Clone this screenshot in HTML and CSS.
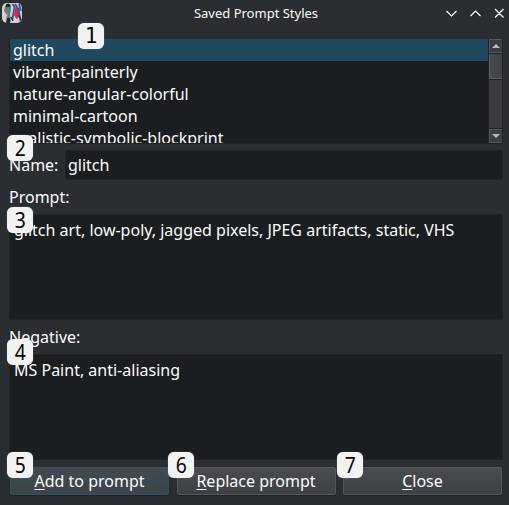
FILE: index.html
```
<!DOCTYPE html>
<html lang="en">
<head>
<meta charset="utf-8">
<title>Saved Prompt Styles</title>
<link rel="stylesheet" href="styles.css">
</head>
<body>
<main class="window">
  <header class="titlebar">
    <svg class="app-icon" viewBox="0 0 20 20">
      <defs><clipPath id="round"><rect width="20" height="20" rx="5"/></clipPath></defs>
      <g clip-path="url(#round)">
        <rect width="20" height="20" fill="#d5d0d0"/>
        <path d="M3 3l3-3 3 2v5l-1 4 1 8H4l1-7-3-4z" fill="#50827f"/>
        <path d="M4 1h4v3H4zM5 15h3v5H4z" fill="#20272c"/>
        <path d="M3 7l3 4-2 7" fill="none" stroke="#a87a75"/>
        <path d="M13.500 4l3 1 .5 9-2.500 2-2.500-4z" fill="#d52b48"/>
        <path d="M10.500 1l2 3-2 12M13 1l3.500 5 2 12M17 1l2 7" fill="none" stroke="#334d99" stroke-width="1.700"/>
        <path d="M9 14l2 4M17 12l2 5" stroke="#232e5c" stroke-width="1.500"/>
      </g>
    </svg>
    <h1 class="title">Saved Prompt Styles</h1>
    <svg class="controls" viewBox="0 0 60 12">
      <path d="M1.500 4L6.500 9L11.500 4M25.500 9L30.500 4L35.500 9M50 2L58.500 10.500M58.500 2L50 10.500"/>
    </svg>
  </header>

  <section class="list">
    <ul class="items">
      <li class="item selected">glitch</li>
      <li class="item">vibrant-painterly</li>
      <li class="item">nature-angular-colorful</li>
      <li class="item">minimal-cartoon</li>
      <li class="item">realistic-symbolic-blockprint</li>
    </ul>
    <div class="scrollbar">
      <div class="arrow"><svg viewBox="0 0 8 4"><path d="M0 4L4 0L8 4z"/></svg></div>
      <div class="thumb"></div>
      <div class="track"></div>
      <div class="arrow"><svg viewBox="0 0 8 4"><path d="M0 0L4 4L8 0z"/></svg></div>
    </div>
  </section>

  <div class="name-row">
    <span>Name:</span>
    <div class="name-field">glitch</div>
  </div>
  <div class="label">Prompt:</div>
  <div class="area">glitch art, low-poly, jagged pixels, JPEG artifacts, static, VHS</div>
  <div class="label">Negative:</div>
  <div class="area">MS Paint, anti-aliasing</div>
  <footer class="buttons">
    <div class="button primary"><span class="key">A</span>dd to prompt</div>
    <div class="button"><span class="key">R</span>eplace prompt</div>
    <div class="button"><span class="key">C</span>lose</div>
  </footer>

  <b class="badge b1">1</b>
  <b class="badge b2"><span class="digit">2</span></b>
  <b class="badge b3"><span class="digit">3</span></b>
  <b class="badge b4"><span class="digit">4</span></b>
  <b class="badge b5"><span class="digit">5</span></b>
  <b class="badge b6"><span class="digit">6</span></b>
  <b class="badge b7"><span class="digit">7</span></b>
</main>
</body>
</html>
```
FILE: styles.css
```
* { box-sizing: border-box; }
body {
  margin: 0;
  background: #2a2d32;
  color: #fcfcfc;
  font: 16px/22px "Noto Sans", sans-serif;
}
.window {
  position: relative;
  width: 509px;
  height: 505px;
  padding: 0 6px 0 9px;
  overflow: hidden;
  white-space: nowrap;
}
.titlebar {
  display: grid;
  grid-template-columns: 65px 1fr 60px;
  align-items: center;
  height: 39px;
  margin: 0 -2px 0 -7px;
  padding-bottom: 13px;
}
.app-icon { width: 20px; height: 20px; }
.title {
  margin: 0;
  text-align: center;
  font-size: 13px;
  font-weight: 400;
  line-height: 20px;
}
.controls {
  width: 60px;
  height: 12px;
  fill: none;
  stroke: #fcfcfc;
  stroke-width: 1.2;
}
.list {
  display: flex;
  width: 494px;
  height: 105px;
  border: solid #202326;
  border-width: 0 1px 1px;
  background: #1b1e20;
}
.items {
  flex: 1;
  height: 104px;
  margin: 0;
  padding: 0;
  list-style: none;
  overflow: hidden;
}
.item { height: 22px; padding-left: 3px; }
.selected { background: #20485e; }
.scrollbar {
  display: flex;
  flex-direction: column;
  width: 14px;
  border-left: 1px solid #202326;
}
.arrow {
  display: flex;
  align-items: center;
  justify-content: center;
  height: 14px;
  border: 1px solid #54575a;
  border-right-color: #3d4043;
  background: #3a3d41;
}
.arrow svg { width: 8px; height: 4px; fill: #b8babb; }
.thumb {
  height: 27px;
  border: solid #202326;
  border-width: 1px 0;
  background: linear-gradient(90deg, #494b50, #3e4044);
  box-shadow: inset 1px -1px #5b5e61;
}
.track {
  flex: 1;
  border-bottom: 1px solid #202326;
  background: #393b40;
}
.name-row {
  display: flex;
  justify-content: space-between;
  align-items: center;
  width: 494px;
  height: 30px;
  margin-top: 6px;
}
.name-field {
  width: 438px;
  height: 30px;
  padding: 3px 2px;
  border: 1px solid #202326;
  border-radius: 3px;
  background: #1b1e20;
}
.label { height: 34px; line-height: 34px; }
.area {
  width: 494px;
  height: 106px;
  padding: 4px;
  border: 1px solid #202326;
  background: #1b1e20;
}
.buttons {
  display: grid;
  grid-template-columns: 159px 159px 159px;
  justify-content: space-between;
  width: 492px;
  margin: 7px 0 0 1px;
}
.button {
  height: 28px;
  border: 1px solid #54575b;
  border-radius: 2px;
  background: linear-gradient(#484b50, #3d4044);
  box-shadow: 0 1px 1px #1f2225;
  text-align: center;
  line-height: 26px;
}
.primary {
  border-color: #2b5265;
  background: linear-gradient(#414b51, #3b444a);
}
.key {
  text-decoration: underline;
  text-decoration-thickness: 1px;
  text-underline-offset: 2px;
}
.badge {
  position: absolute;
  width: 26px;
  height: 26px;
  border-radius: 6px;
  background: #f2f2f2;
  box-shadow: 0 0 1px #aaa;
  color: #080808;
  font: 22px/25px "Noto Sans", sans-serif;
  text-align: center;
}
.digit { display: inline-block; transform: scaleX(0.88); }
.b1 { left: 78px; top: 23px; font: 21px/26px "DejaVu Sans Mono", monospace; }
.b2 { left: 7px; top: 135px; }
.b3 { left: 7px; top: 207px; }
.b4 { left: 7px; top: 339px; }
.b5 { left: 7px; top: 452px; }
.b6 { left: 168px; top: 452px; }
.b7 { left: 337px; top: 452px; }
```
